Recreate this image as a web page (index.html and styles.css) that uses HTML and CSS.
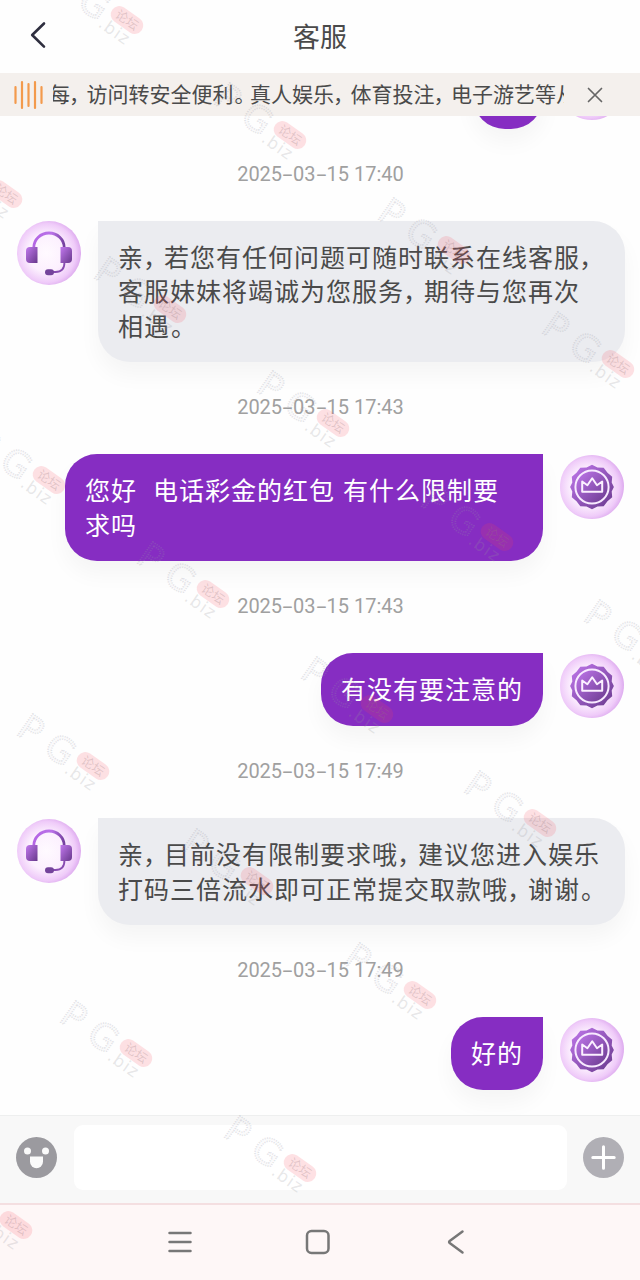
FILE: index.html
```html
<!DOCTYPE html>
<html lang="zh-CN">
<head>
<meta charset="utf-8">
<title>客服</title>
<link rel="stylesheet" href="styles.css">
</head>
<body>
<svg class="defs" width="0" height="0" aria-hidden="true">
  <defs>
    <radialGradient id="orb" cx=".46" cy=".5" r=".56">
      <stop offset="0" stop-color="#fffaff"/><stop offset=".52" stop-color="#fcf0fe"/>
      <stop offset=".82" stop-color="#efcbf9"/><stop offset="1" stop-color="#d9a3ec"/>
    </radialGradient>
    <linearGradient id="metal" x1="0" y1="0" x2="1" y2="1">
      <stop offset="0" stop-color="#c178ed"/><stop offset="1" stop-color="#68388c"/>
    </linearGradient>
    <linearGradient id="band" x1="0" y1="0" x2="1" y2="0">
      <stop offset="0" stop-color="#b465e4"/><stop offset=".6" stop-color="#b971e8"/><stop offset="1" stop-color="#74409e"/>
    </linearGradient>
    <symbol id="agent" viewBox="0 0 64 64">
      <circle cx="32" cy="32" r="32" fill="url(#orb)"/>
      <path d="M16.800 28v-1.500a15.200 14.500 0 0 1 30.400 0V28" fill="none" stroke="url(#band)" stroke-width="2.800"/>
      <path d="M47.500 41c0 7-3 10-9 10h-3" fill="none" stroke="#874bb0" stroke-width="1.800"/>
      <path d="M20.500 26v16h-7.500q-4 0-4-4v-8q0-4 4-4z" fill="url(#metal)"/>
      <path d="M43.500 26v16h7.500q4 0 4-4v-8q0-4-4-4z" fill="url(#metal)"/>
      <rect x="28" y="48.300" width="9" height="6" rx="3" fill="#74439b"/>
    </symbol>
    <symbol id="member" viewBox="0 0 64 64">
      <path d="M32 0c18 0 32 15 32 31 0 17-13 33-32 33S0 50 0 32 13 0 32 0z" fill="url(#orb)"/>
      <path d="M32 9.800l5.500 2.700 6.200.3 3.800 4.900 4.700 4.100-.5 5.600 2.200 4.600-2.200 4.600.5 5.600-4.700 4.100-3.800 4.900-6.200.3L32 54.200l-5.500-2.700-6.200-.3-3.800-4.900-4.700-4.100.5-5.600-2.200-4.600 2.200-4.600-.5-5.600 4.700-4.100 3.800-4.900 6.200-.3z" fill="url(#metal)"/>
      <circle cx="32" cy="32" r="16.600" fill="url(#metal)" stroke="#f8eaff" stroke-width="2"/>
      <path d="M22.200 26.500l5.200 3.700 4.800-7 4.800 7 5.200-3.700v10.200h-20z" fill="none" stroke="#fbf0ff" stroke-width="2" stroke-linejoin="round"/>
    </symbol>
    <g id="mark">
      <g transform="rotate(35)">
        <text class="mark-big" x="-83" y="18">P</text>
        <text class="mark-big" x="-50" y="18">G</text>
        <text class="mark-small" x="-21" y="22">.biz</text>
        <rect x="-18" y="-8.500" width="36" height="17" rx="8.500" class="mark-pill"/>
        <text class="mark-label" x="-12.500" y="4.500">论坛</text>
      </g>
    </g>
  </defs>
</svg>

<div class="app">
  <header class="header">
    <svg class="back" width="20" height="30" viewBox="0 0 20 30"><path d="M16 3.500L4.200 15 16 26.700"/></svg>
    <h1 class="title">客服</h1>
  </header>

  <div class="notice">
    <svg class="sound" width="30" height="30" viewBox="0 0 30 30"><path d="M2.500 7v16M9 2v26M15.500 4v22M22 2v26M28.500 7v16"/></svg>
    <div class="ticker"><p class="ticker-text">每<i>，</i>访问转安全便利<i class="stop">。</i>真人娱乐<i>，</i>体育投注<i>，</i>电子游艺等从</p></div>
    <svg class="close" width="16" height="16" viewBox="0 0 16 16"><path d="M1.500 1.500l13 13M14.500 1.500l-13 13"/></svg>
  </div>

  <main class="chat">
    <div class="row sent"><div class="bubble short">&nbsp;</div><svg class="avatar"><use href="#member"/></svg></div>
    <time class="stamp">2025<b>-</b>03<b>-</b>15 17:40</time>
    <div class="row"><svg class="avatar"><use href="#agent"/></svg><div class="bubble">亲<i>，</i>若您有任何问题可随时联系在线客服<i>，</i><br>客服妹妹将竭诚为您服务<i>，</i>期待与您再次<br>相遇<i class="stop">。</i></div></div>
    <time class="stamp">2025<b>-</b>03<b>-</b>15 17:43</time>
    <div class="row sent"><div class="bubble wide">您好  电话彩金的红包 有什么限制要<br>求吗</div><svg class="avatar"><use href="#member"/></svg></div>
    <time class="stamp">2025<b>-</b>03<b>-</b>15 17:43</time>
    <div class="row sent"><div class="bubble">有没有要注意的</div><svg class="avatar"><use href="#member"/></svg></div>
    <time class="stamp">2025<b>-</b>03<b>-</b>15 17:49</time>
    <div class="row"><svg class="avatar"><use href="#agent"/></svg><div class="bubble">亲<i>，</i>目前没有限制要求哦<i>，</i>建议您进入娱乐<br>打码三倍流水即可正常提交取款哦<i>，</i>谢谢<i class="stop">。</i></div></div>
    <time class="stamp">2025<b>-</b>03<b>-</b>15 17:49</time>
    <div class="row sent"><div class="bubble">好的</div><svg class="avatar"><use href="#member"/></svg></div>
  </main>

  <div class="composer">
    <svg width="41" height="41" viewBox="0 0 41 41"><circle cx="20.500" cy="20.500" r="20.500" fill="#9b9a9f"/><circle cx="11.500" cy="14" r="3.500" fill="#fafafa"/><circle cx="29.500" cy="14" r="3.500" fill="#fafafa"/><path d="M14 19.500h13v5.200a6.500 6.500 0 0 1-13 0z" fill="#fafafa"/></svg>
    <div class="field"></div>
    <svg width="41" height="41" viewBox="0 0 41 41"><circle cx="20.500" cy="20.500" r="20.500" fill="#b0afb5"/><path d="M20.500 9.800v21.400M9.800 20.500h21.400" stroke="#fff" stroke-width="3" stroke-linecap="round"/></svg>
  </div>

  <nav class="system">
    <svg width="28" height="28" viewBox="0 0 28 28"><path d="M3.500 5h21M3.500 14h21M3.500 23h21"/></svg>
    <svg width="28" height="28" viewBox="0 0 28 28"><rect x="3" y="3" width="21.500" height="22" rx="4.500"/></svg>
    <svg width="28" height="28" viewBox="0 0 28 28"><path d="M20.500 3.500L8 12.700q-1.800 1.300 0 2.600L20.500 24.500"/></svg>
  </nav>

  <svg class="watermarks" width="640" height="1280" viewBox="0 0 640 1280">
    <use href="#mark" x="127" y="20"/><use href="#mark" x="290" y="135"/><use href="#mark" x="454" y="250"/><use href="#mark" x="618" y="364"/>
    <use href="#mark" x="6" y="194"/><use href="#mark" x="170" y="309"/><use href="#mark" x="333" y="423"/><use href="#mark" x="497" y="537"/><use href="#mark" x="660" y="652"/>
    <use href="#mark" x="49" y="480"/><use href="#mark" x="213" y="594"/><use href="#mark" x="377" y="709"/><use href="#mark" x="540" y="823"/>
    <use href="#mark" x="93" y="766"/><use href="#mark" x="257" y="881"/><use href="#mark" x="420" y="995"/>
    <use href="#mark" x="136" y="1053"/><use href="#mark" x="300" y="1168"/><use href="#mark" x="16" y="1225"/>
  </svg>
</div>
</body>
</html>
```
FILE: styles.css
```css
* { box-sizing: border-box; }
body { margin: 0; background: #fefefe; font-family: "Noto Sans CJK SC", sans-serif; }
i { font-style: normal; }
.defs { position: absolute; }
.app {
  position: relative;
  display: flex;
  flex-direction: column;
  width: 640px;
  height: 1280px;
  overflow: hidden;
}
.header {
  display: grid;
  grid-template-columns: 48px 1fr 48px;
  align-items: center;
  height: 73px;
  padding-bottom: 2px;
}
.back { justify-self: end; margin-bottom: 1px; }
.back path { fill: none; stroke: #2e2e3f; stroke-width: 2.6; stroke-linecap: round; stroke-linejoin: round; }
.title { margin: 0; font-size: 27px; font-weight: 400; line-height: 40px; text-align: center; color: #4a4a4a; }

.notice { display: flex; align-items: center; height: 43px; padding-left: 13px; background: #f4f0ed; }
.sound path { stroke: #f39a4c; stroke-width: 2.2; stroke-linecap: round; }
.ticker { width: 511px; height: 43px; margin-left: 10px; overflow: hidden; }
.ticker-text { margin: 0 0 0 -4px; font-size: 21px; line-height: 41px; white-space: nowrap; color: #4a4a4a; }
.ticker-text i { display: inline-block; width: 16.5px; text-indent: -1px; }
.ticker-text .stop { text-indent: 1px; }
.close { margin-left: 23px; }
.close path { stroke: #666; stroke-width: 1.7; stroke-linecap: round; }

.chat {
  display: flex;
  flex-direction: column;
  justify-content: flex-end;
  height: 999px;
  padding: 0 16px 25px 17px;
  overflow: hidden;
}
.row { display: flex; flex: none; align-items: flex-start; gap: 17px; }
.sent { justify-content: flex-end; }
.avatar { flex: none; width: 64px; height: 64px; margin-top: .5px; }
.bubble {
  flex: none;
  padding: 18px 0 20px 20px;
  border-radius: 0 32px 32px 32px;
  width: 527px;
  background: #ebecf0;
  box-shadow: 0 13px 22px rgba(0, 0, 0, .04);
  font-size: 25px;
  line-height: 34.5px;
  letter-spacing: 1px;
  white-space: pre;
  color: #4a4a4a;
}
.bubble i { display: inline-block; width: 20px; text-indent: -1px; }
.bubble .stop { text-indent: 1px; }
.sent .bubble {
  width: auto;
  min-height: 73px;
  padding-right: 20px;
  border-radius: 32px 0 32px 32px;
  background: #862dc2;
  word-spacing: 1.4px;
  color: #fff;
}
.sent .wide { width: 478px; }
.sent .short { width: 70px; }
.stamp {
  flex: none;
  height: 92px;
  font: 20px/91px Roboto, sans-serif;
  text-align: center;
  color: #a0a0a0;
}
.stamp b { display: inline-block; width: 11px; font-weight: 400; transform: scaleX(1.8); }

.composer {
  display: flex;
  align-items: center;
  justify-content: space-between;
  height: 88px;
  padding: 0 16px 5px;
  border-top: 1px solid #eeefef;
  background: #f8f8f8;
}
.field { width: 493px; height: 65px; border-radius: 9px; background: #fff; }
.system {
  display: grid;
  grid-template-columns: repeat(3, 138px);
  justify-items: center;
  height: 77px;
  padding: 22.5px 0 0 111px;
  border-top: 2px solid #f4dfe1;
  background: #fef7f7;
}
.system path, .system rect { fill: none; stroke: #777; stroke-width: 2.5; stroke-linecap: round; stroke-linejoin: round; }

.watermarks { position: absolute; inset: 0; pointer-events: none; }
.mark-big { font: 36px "DejaVu Sans", sans-serif; fill: rgba(150, 150, 165, .04); stroke: rgba(150, 150, 165, .26); stroke-width: 1.6; stroke-dasharray: 1.2 1.2; }
.mark-small { font: 17px "DejaVu Sans", sans-serif; letter-spacing: 1.2px; fill: rgba(150, 150, 155, .22); }
.mark-pill { fill: rgba(246, 70, 88, .16); }
.mark-label { font: 12.5px "Noto Sans CJK SC", sans-serif; fill: rgba(150, 120, 125, .28); }
```
